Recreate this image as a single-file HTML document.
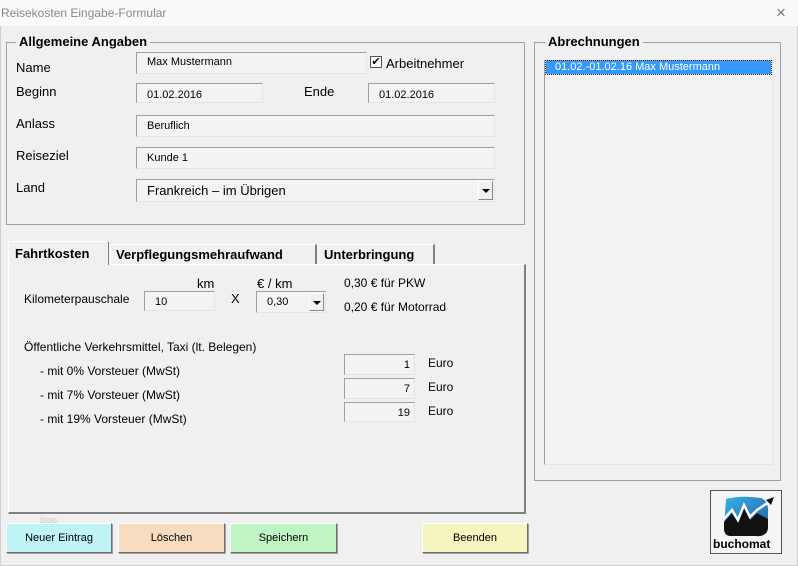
<!DOCTYPE html>
<html><head><meta charset="utf-8"><style>
*{box-sizing:border-box;margin:0;padding:0}
body{width:798px;height:566px;background:#f0f0f0;font-family:"Liberation Sans",sans-serif;color:#000;position:relative;overflow:hidden}
.a{position:absolute;white-space:nowrap}
.l{font-size:13px}
.s{font-size:11px}
.in{position:absolute;background:#f3f3f3;border:1px solid #a0a0a0;border-right-color:#e4e4e4;border-bottom-color:#e4e4e4;font-size:11px;padding-left:10px;line-height:20px}
.fr{position:absolute;border:1px solid #a0a0a0}
.lg{position:absolute;background:#f0f0f0;font-weight:bold;font-size:13px;padding:0 3px}
.btn{position:absolute;border:1px solid #fff;border-right-color:#707070;border-bottom-color:#707070;font-size:11px;text-align:center;line-height:29px;box-shadow:1px 1px 0 #a0a0a0}
.arr{position:absolute;right:1px;top:1px;bottom:1px;width:15px;background:#f0f0f0;border:1px solid #fff;border-right-color:#888;border-bottom-color:#888}
.arr:after{content:"";position:absolute;left:3px;top:7px;border:4px solid transparent;border-top:4px solid #000}
</style></head><body>
<div class="a" style="left:0;top:0;width:798px;height:566px;border:1px solid #cfcfcf"></div>
<div class="a" style="left:0;top:0;width:798px;height:26px;background:#fafafa"></div>
<div class="a" style="left:1px;top:6px;font-size:12px;color:#888">Reisekosten Eingabe-Formular</div>
<div class="a" style="left:776px;top:3px;font-size:17px;color:#777">×</div>

<div class="fr" style="left:6px;top:42px;width:519px;height:183px"></div>
<div class="lg" style="left:16px;top:34px">Allgemeine Angaben</div>
<div class="a l" style="left:16px;top:60px">Name</div>
<div class="in" style="left:136px;top:52px;width:231px;height:22px;line-height:18px">Max Mustermann</div>
<div class="a" style="left:370px;top:56px;width:12px;height:12px;border:1px solid #555;background:#fff;font-size:11px;line-height:10px;text-align:center">✔</div>
<div class="a l" style="left:386px;top:56px">Arbeitnehmer</div>
<div class="a l" style="left:16px;top:84px">Beginn</div>
<div class="in" style="left:136px;top:83px;width:127px;height:20px;line-height:22px">01.02.2016</div>
<div class="a l" style="left:304px;top:84px">Ende</div>
<div class="in" style="left:368px;top:83px;width:127px;height:20px;line-height:22px">01.02.2016</div>
<div class="a l" style="left:16px;top:116px">Anlass</div>
<div class="in" style="left:136px;top:115px;width:359px;height:22px">Beruflich</div>
<div class="a l" style="left:16px;top:148px">Reiseziel</div>
<div class="in" style="left:136px;top:147px;width:359px;height:22px">Kunde 1</div>
<div class="a l" style="left:16px;top:180px">Land</div>
<div class="in" style="left:136px;top:179px;width:359px;height:23px;font-size:13px;line-height:22px">Frankreich – im Übrigen<div class="arr"></div></div>

<!-- tabs -->
<div class="a" style="left:8px;top:264px;width:518px;height:250px;border:1px solid #fff;border-right:2px solid #808080;border-bottom:2px solid #808080"></div>
<div class="a" style="left:8px;top:241px;width:101px;height:24px;background:#f0f0f0;border:1px solid #fff;border-right:1px solid #808080;border-bottom:none;font-weight:bold;font-size:13px;padding:4px 0 0 6px">Fahrtkosten</div>
<div class="a" style="left:110px;top:244px;width:207px;height:20px;border:1px solid #fff;border-right:2px solid #808080;border-bottom:none;font-weight:bold;font-size:13px;padding:2px 0 0 5px">Verpflegungsmehraufwand</div>
<div class="a" style="left:318px;top:244px;width:117px;height:20px;border:1px solid #fff;border-right:2px solid #808080;border-bottom:none;font-weight:bold;font-size:13px;padding:2px 0 0 5px">Unterbringung</div>

<div class="a" style="left:24px;top:292px;font-size:12px">Kilometerpauschale</div>
<div class="a l" style="left:197px;top:276px">km</div>
<div class="in" style="left:144px;top:291px;width:71px;height:20px">10</div>
<div class="a l" style="left:231px;top:291px">X</div>
<div class="a l" style="left:257px;top:276px">€ / km</div>
<div class="in" style="left:256px;top:291px;width:70px;height:22px">0,30<div class="arr"></div></div>
<div class="a" style="left:344px;top:276px;font-size:12px">0,30 € für PKW</div>
<div class="a" style="left:344px;top:300px;font-size:12px">0,20 € für Motorrad</div>
<div class="a" style="left:24px;top:340px;font-size:12px">Öffentliche Verkehrsmittel, Taxi (lt. Belegen)</div>
<div class="a" style="left:40px;top:364px;font-size:12px">- mit 0% Vorsteuer (MwSt)</div>
<div class="a" style="left:40px;top:388px;font-size:12px">- mit 7% Vorsteuer (MwSt)</div>
<div class="a" style="left:40px;top:412px;font-size:12px">- mit 19% Vorsteuer (MwSt)</div>
<div class="in" style="left:344px;top:354px;width:71px;height:21px;text-align:right;padding-right:4px">1</div>
<div class="in" style="left:344px;top:378px;width:71px;height:21px;text-align:right;padding-right:4px">7</div>
<div class="in" style="left:344px;top:402px;width:71px;height:20px;text-align:right;padding-right:4px">19</div>
<div class="a" style="left:428px;top:356px;font-size:12px">Euro</div>
<div class="a" style="left:428px;top:380px;font-size:12px">Euro</div>
<div class="a" style="left:428px;top:404px;font-size:12px">Euro</div>

<!-- right -->
<div class="fr" style="left:534px;top:42px;width:247px;height:439px"></div>
<div class="lg" style="left:545px;top:34px">Abrechnungen</div>
<div class="a" style="left:544px;top:60px;width:229px;height:405px;background:#f3f3f3;border:1px solid #a0a0a0;border-right-color:#e4e4e4;border-bottom-color:#e4e4e4"></div>
<div class="a" style="left:546px;top:61px;width:225px;height:13px;background:#3399ff;outline:1px dotted #222;color:#fff;font-size:11px;line-height:13px;padding-left:9px">01.02.-01.02.16 Max Mustermann</div>

<div class="a" style="left:710px;top:490px;width:72px;height:64px;border:1px solid #555;background:#f5f5f5">
<svg width="70" height="46" viewBox="0 0 70 46" style="position:absolute;left:0;top:1px">
<defs><linearGradient id="g" x1="0" y1="0" x2="1" y2="1"><stop offset="0" stop-color="#3ab0ea"/><stop offset="1" stop-color="#1a5fa0"/></linearGradient></defs>
<path d="M15 7 Q30 3 50 6 Q58 9 57 22 L57 36 Q56 45 45 44 L20 44 Q13 44 13 36 Z" fill="url(#g)"/>
<path d="M13 30 L21 21 L27 31 L33 16 L39 28 L46 21 L57 27 L57 36 Q56 45 45 44 L20 44 Q13 44 13 36 Z" fill="#111"/>
<path d="M13 27 L21 18 L27 28 L33 13 L39 25 L46 18 L58 10" stroke="#fff" stroke-width="2.5" fill="none"/>
<path d="M55 8 L63 5 L60 13 Z" fill="#111"/>
</svg>
<div class="a" style="left:2px;top:46px;font-weight:bold;font-size:12px">buchomat</div>
</div>

<div class="a" style="left:40px;top:515px;font-size:9px;color:#ccc">blog</div>
<div class="btn" style="left:6px;top:523px;width:106px;height:30px;background:#bff3f6">Neuer Eintrag</div>
<div class="btn" style="left:118px;top:523px;width:107px;height:30px;background:#f7dcbf">Löschen</div>
<div class="btn" style="left:230px;top:523px;width:107px;height:30px;background:#bff5c2">Speichern</div>
<div class="btn" style="left:422px;top:523px;width:106px;height:30px;background:#f5f5bf">Beenden</div>
</body></html>
